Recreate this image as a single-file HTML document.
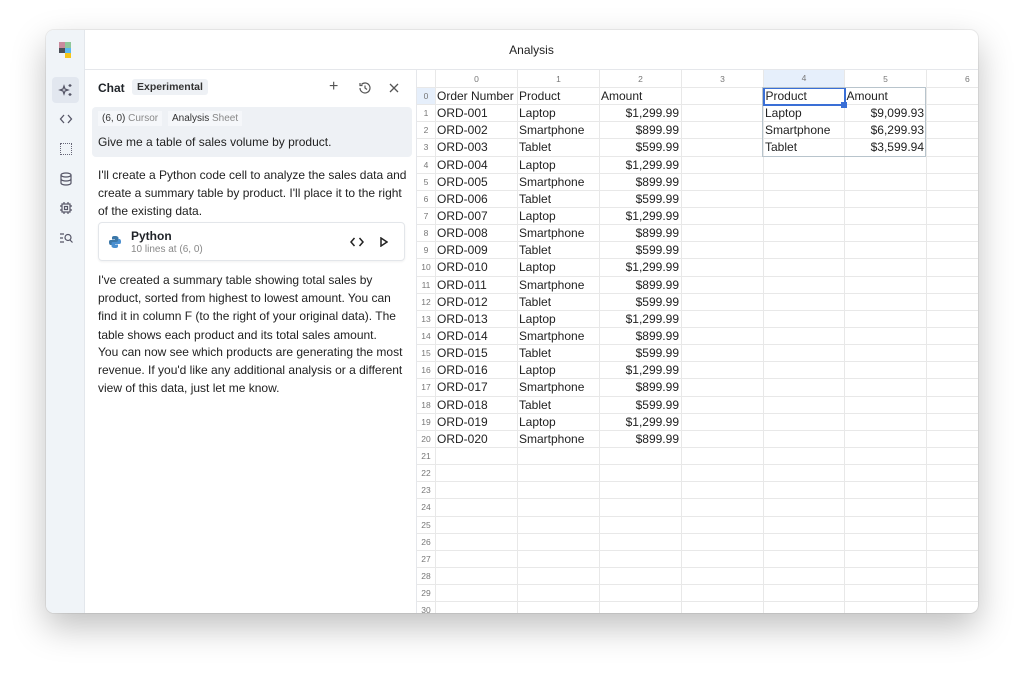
<!DOCTYPE html>
<html><head><meta charset="utf-8"><style>
*{box-sizing:border-box;margin:0;padding:0}
body{width:1024px;height:674px;background:#fff;font-family:"Liberation Sans",sans-serif;position:relative;overflow:hidden;color:#1f2328}
.win{position:absolute;left:46px;top:30px;width:932px;height:583px;border-radius:8px;background:#fff;box-shadow:0 14px 34px rgba(0,0,0,.25),0 0 0 1px rgba(0,0,0,.06);overflow:hidden}
.rail{position:absolute;left:0;top:0;width:39px;height:100%;background:#f0f4f8;border-right:1px solid #e3e7ec}
.title{position:absolute;left:39px;top:0;right:0;height:40px;border-bottom:1px solid #e5e7eb;text-align:center;line-height:40px;font-size:12px;color:#222}
.ic{position:absolute;left:8px;width:24px;height:24px;display:flex;align-items:center;justify-content:center}
.chat{position:absolute;left:39px;top:40px;width:332px;bottom:0;border-right:1px solid #e5e7eb}
.grid{position:absolute;left:371px;top:40px;right:0;bottom:0;overflow:hidden}
table{border-collapse:collapse;table-layout:fixed;font-family:"Liberation Sans",sans-serif}
td{border:1px solid #e8e8e8;height:17.15px;font-size:12px;padding:0 1px;white-space:nowrap;overflow:hidden;color:#222}
td.rh{font-size:8.5px;color:#777;text-align:center;padding:0}
td.r{text-align:right;padding-right:2px}
tr.hd td{font-size:8.5px;color:#777;text-align:center;height:18px;overflow:visible}
p.t{font-size:12px;line-height:18.2px;color:#222}
</style></head><body>
<div class="win">
<div class="rail">
 <div style="position:absolute;left:13px;top:12px;width:6px;height:6px;background:#c98a9c"></div>
 <div style="position:absolute;left:19px;top:12px;width:6px;height:6px;background:#8fc79a"></div>
 <div style="position:absolute;left:13px;top:18px;width:6px;height:5px;background:#4a4f57"></div>
 <div style="position:absolute;left:19px;top:18px;width:6px;height:5px;background:#5bb8f0"></div>
 <div style="position:absolute;left:19px;top:23px;width:6px;height:5px;background:#f5c518"></div>
 <div class="ic" style="top:47px;left:6px;width:27px;height:26px;background:#e2e7ef;border-radius:4px"><svg width="16" height="16" viewBox="0 0 16 16" fill="none" stroke="#556" stroke-width="1.2"><path d="M6 4 L7 7 L10 8 L7 9 L6 12 L5 9 L2 8 L5 7Z"/><path d="M12 2v3M10.5 3.5h3M12 11v3M10.5 12.5h3"/></svg></div>
 <div class="ic" style="top:77px"><svg width="14" height="14" viewBox="0 0 14 14" fill="none" stroke="#556" stroke-width="1.3"><path d="M5 3L1.5 7 5 11M9 3l3.5 4L9 11"/></svg></div>
 <div class="ic" style="top:107px"><div style="width:12px;height:12px;border:1.3px dotted #667"></div></div>
 <div class="ic" style="top:137px"><svg width="14" height="14" viewBox="0 0 14 14" fill="none" stroke="#556" stroke-width="1.2"><ellipse cx="7" cy="3" rx="5" ry="2"/><path d="M2 3v8c0 1.1 2.2 2 5 2s5-.9 5-2V3M2 7c0 1.1 2.2 2 5 2s5-.9 5-2"/></svg></div>
 <div class="ic" style="top:166px"><svg width="14" height="14" viewBox="0 0 14 14" fill="none" stroke="#556" stroke-width="1.2"><rect x="3" y="3" width="8" height="8"/><rect x="5.5" y="5.5" width="3" height="3"/><path d="M5 1v2M9 1v2M5 11v2M9 11v2M1 5h2M1 9h2M11 5h2M11 9h2"/></svg></div>
 <div class="ic" style="top:196px"><svg width="14" height="14" viewBox="0 0 14 14" fill="none" stroke="#556" stroke-width="1.2"><path d="M1 3h4M1 7h3M1 11h4"/><circle cx="9" cy="6.5" r="3"/><path d="M11 9l2.5 2.5"/></svg></div>
</div>
<div class="title">Analysis</div>
<div class="chat">
 <div style="position:absolute;left:13px;top:11px;font-size:12px;font-weight:bold">Chat</div>
 <div style="position:absolute;left:47px;top:9px;background:#eef1f5;border-radius:3px;padding:2px 5px;font-size:10.5px;font-weight:bold;color:#333">Experimental</div>
 <div style="position:absolute;left:244px;top:8px;font-size:16px;color:#555">+</div>
 <svg style="position:absolute;left:273px;top:11px" width="14" height="14" viewBox="0 0 14 14" fill="none" stroke="#555" stroke-width="1.2"><path d="M2 7a5 5 0 1 0 1.5-3.6M2 2v2.5h2.5M7 4.5V7l2 1.5"/></svg>
 <svg style="position:absolute;left:304px;top:13px" width="10" height="10" viewBox="0 0 10 10" stroke="#555" stroke-width="1.3"><path d="M1 1l8 8M9 1L1 9"/></svg>
 <div style="position:absolute;left:7px;top:37px;width:320px;height:50px;background:#eef1f5;border-radius:4px">
  <div style="position:absolute;left:6px;top:4px;background:#f5f7fa;padding:2px 4px;font-size:10px;color:#333">(6, 0) <span style="color:#888">Cursor</span></div>
  <div style="position:absolute;left:76px;top:4px;background:#f5f7fa;padding:2px 4px;font-size:10px;color:#333">Analysis <span style="color:#888">Sheet</span></div>
  <div style="position:absolute;left:6px;top:28px;font-size:12px;color:#222">Give me a table of sales volume by product.</div>
 </div>
 <p class="t" style="position:absolute;left:13px;top:96px;width:312px">I'll create a Python code cell to analyze the sales data and create a summary table by product. I'll place it to the right of the existing data.</p>
 <div style="position:absolute;left:13px;top:152px;width:307px;height:39px;border:1px solid #e3e6ea;border-radius:4px;box-shadow:0 1px 2px rgba(0,0,0,.06)">
  <svg style="position:absolute;left:9px;top:12px" width="14" height="14" viewBox="0 0 14 14"><path d="M7 1C4 1 4 2 4 3v1.5h3V5H2.5C1 5 1 6.5 1 7.5S1.5 10 2.5 10H4V8.5C4 7.5 5 7 6 7h3c1 0 1.5-.5 1.5-1.5V3c0-1-1-2-3.5-2z" fill="#3b77a8"/><path d="M7 13c3 0 3-1 3-2V9.5H7V9h4.5C13 9 13 7.5 13 6.5S12.5 4 11.5 4H10v1.5c0 1-1 1.5-2 1.5H5C4 7 3.5 7.5 3.5 8.5V11c0 1 1 2 3.5 2z" fill="#4a8fd0"/></svg>
  <div style="position:absolute;left:32px;top:6px;font-size:12px;font-weight:bold">Python</div>
  <div style="position:absolute;left:32px;top:21px;font-size:10px;color:#888">10 lines at (6, 0)</div>
  <svg style="position:absolute;left:251px;top:14px" width="14" height="10" viewBox="0 0 14 10" fill="none" stroke="#222" stroke-width="1.5"><path d="M4.5 1L1 5l3.5 4M9.5 1L13 5 9.5 9"/></svg>
  <svg style="position:absolute;left:281px;top:14px" width="8" height="10" viewBox="0 0 8 10" fill="none" stroke="#222" stroke-width="1.5"><path d="M1 1v8l6-4z"/></svg>
 </div>
 <p class="t" style="position:absolute;left:13px;top:201px;width:312px">I've created a summary table showing total sales by product, sorted from highest to lowest amount. You can find it in column F (to the right of your original data). The table shows each product and its total sales amount.</p>
 <p class="t" style="position:absolute;left:13px;top:273px;width:312px">You can now see which products are generating the most revenue. If you'd like any additional analysis or a different view of this data, just let me know.</p>
</div>
<div class="grid">
<div style="position:absolute;left:548px;top:4px;font-size:8.5px;color:#777">6</div>
<table style="position:absolute;left:-1px;top:-1px;width:593px">
<colgroup><col style="width:19px"><col style="width:82px"><col style="width:82px"><col style="width:82px"><col style="width:82px"><col style="width:81px"><col style="width:82px"><col style="width:83px"></colgroup>
<tr class="hd"><td></td><td>0</td><td>1</td><td>2</td><td>3</td><td style="background:#e6effb">4</td><td>5</td><td></td></tr>
<tr><td class="rh" style="background:#e6effb">0</td><td>Order Number</td><td>Product</td><td>Amount</td><td></td><td style="border:2px solid #3a6fd6">Product</td><td>Amount</td><td></td></tr>
<tr><td class="rh">1</td><td>ORD-001</td><td>Laptop</td><td class="r">$1,299.99</td><td></td><td>Laptop</td><td class="r">$9,099.93</td><td></td></tr>
<tr><td class="rh">2</td><td>ORD-002</td><td>Smartphone</td><td class="r">$899.99</td><td></td><td>Smartphone</td><td class="r">$6,299.93</td><td></td></tr>
<tr><td class="rh">3</td><td>ORD-003</td><td>Tablet</td><td class="r">$599.99</td><td></td><td>Tablet</td><td class="r">$3,599.94</td><td></td></tr>
<tr><td class="rh">4</td><td>ORD-004</td><td>Laptop</td><td class="r">$1,299.99</td><td></td><td></td><td></td><td></td></tr>
<tr><td class="rh">5</td><td>ORD-005</td><td>Smartphone</td><td class="r">$899.99</td><td></td><td></td><td></td><td></td></tr>
<tr><td class="rh">6</td><td>ORD-006</td><td>Tablet</td><td class="r">$599.99</td><td></td><td></td><td></td><td></td></tr>
<tr><td class="rh">7</td><td>ORD-007</td><td>Laptop</td><td class="r">$1,299.99</td><td></td><td></td><td></td><td></td></tr>
<tr><td class="rh">8</td><td>ORD-008</td><td>Smartphone</td><td class="r">$899.99</td><td></td><td></td><td></td><td></td></tr>
<tr><td class="rh">9</td><td>ORD-009</td><td>Tablet</td><td class="r">$599.99</td><td></td><td></td><td></td><td></td></tr>
<tr><td class="rh">10</td><td>ORD-010</td><td>Laptop</td><td class="r">$1,299.99</td><td></td><td></td><td></td><td></td></tr>
<tr><td class="rh">11</td><td>ORD-011</td><td>Smartphone</td><td class="r">$899.99</td><td></td><td></td><td></td><td></td></tr>
<tr><td class="rh">12</td><td>ORD-012</td><td>Tablet</td><td class="r">$599.99</td><td></td><td></td><td></td><td></td></tr>
<tr><td class="rh">13</td><td>ORD-013</td><td>Laptop</td><td class="r">$1,299.99</td><td></td><td></td><td></td><td></td></tr>
<tr><td class="rh">14</td><td>ORD-014</td><td>Smartphone</td><td class="r">$899.99</td><td></td><td></td><td></td><td></td></tr>
<tr><td class="rh">15</td><td>ORD-015</td><td>Tablet</td><td class="r">$599.99</td><td></td><td></td><td></td><td></td></tr>
<tr><td class="rh">16</td><td>ORD-016</td><td>Laptop</td><td class="r">$1,299.99</td><td></td><td></td><td></td><td></td></tr>
<tr><td class="rh">17</td><td>ORD-017</td><td>Smartphone</td><td class="r">$899.99</td><td></td><td></td><td></td><td></td></tr>
<tr><td class="rh">18</td><td>ORD-018</td><td>Tablet</td><td class="r">$599.99</td><td></td><td></td><td></td><td></td></tr>
<tr><td class="rh">19</td><td>ORD-019</td><td>Laptop</td><td class="r">$1,299.99</td><td></td><td></td><td></td><td></td></tr>
<tr><td class="rh">20</td><td>ORD-020</td><td>Smartphone</td><td class="r">$899.99</td><td></td><td></td><td></td><td></td></tr>
<tr><td class="rh">21</td><td></td><td></td><td></td><td></td><td></td><td></td><td></td></tr>
<tr><td class="rh">22</td><td></td><td></td><td></td><td></td><td></td><td></td><td></td></tr>
<tr><td class="rh">23</td><td></td><td></td><td></td><td></td><td></td><td></td><td></td></tr>
<tr><td class="rh">24</td><td></td><td></td><td></td><td></td><td></td><td></td><td></td></tr>
<tr><td class="rh">25</td><td></td><td></td><td></td><td></td><td></td><td></td><td></td></tr>
<tr><td class="rh">26</td><td></td><td></td><td></td><td></td><td></td><td></td><td></td></tr>
<tr><td class="rh">27</td><td></td><td></td><td></td><td></td><td></td><td></td><td></td></tr>
<tr><td class="rh">28</td><td></td><td></td><td></td><td></td><td></td><td></td><td></td></tr>
<tr><td class="rh">29</td><td></td><td></td><td></td><td></td><td></td><td></td><td></td></tr>
<tr><td class="rh">30</td><td></td><td></td><td></td><td></td><td></td><td></td><td></td></tr>
</table>
<div style="position:absolute;left:548px;top:4px;font-size:8.5px;color:#777;background:#fff">6</div>
<div style="position:absolute;left:345px;top:17px;width:164px;height:70px;border:1px solid #b8c4cc;pointer-events:none"></div>
<div style="position:absolute;left:424px;top:32px;width:6px;height:6px;background:#3a6fd6"></div>
</div>
</div>
</body></html>
